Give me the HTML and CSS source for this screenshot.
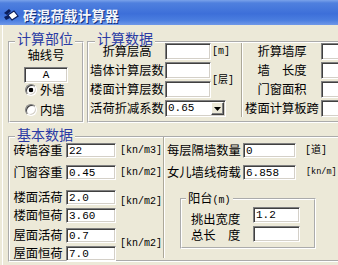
FILE: index.html
```html
<!DOCTYPE html>
<html lang="zh-CN">
<head>
    <meta charset="UTF-8">
    <meta name="viewport" content="width=device-width, initial-scale=1.0">
    <title>砖混荷载计算器</title>
    <link rel="stylesheet" href="styles.css">
</head>
<body>
    <div class="titlebar">
        <svg class="app-icon" width="16" height="14" viewBox="0 0 16 14">
            <path d="M1 5 L6 1 L8 3 L4 7 Z" fill="#0b1e5c"/>
            <path d="M5 7 L11 3 L15 8 L9 12 Z" fill="#fff" stroke="#0b1e5c" stroke-width="1.2"/>
            <path d="M1 9 L5 7 L7 10 L3 12 Z" fill="#0b1e5c"/>
        </svg>
        <span class="title">砖混荷载计算器</span>
    </div>
    <div class="client">
        <div class="top-row">
            <div class="group group-pos">
                <span class="caption">计算部位</span>
                <div class="axis-label">轴线号</div>
                <input class="field axis-input" value="A">
                <label class="radio"><input type="radio" name="wall" checked><span>外墙</span></label>
                <label class="radio"><input type="radio" name="wall"><span>内墙</span></label>
            </div>
            <div class="group group-calc">
                <span class="caption">计算数据</span>
                <div class="calc-grid">
                    <span class="sep"></span>

                    <span class="lbl">折算层高</span>
                    <input class="field" value="">
                    <span class="unit">[m]</span>
                    <span class="lbl">折算墙厚</span>
                    <input class="field" value="">

                    <span class="lbl">墙体计算层数</span>
                    <input class="field" value="">
                    <span class="unit span2">[层]</span>
                    <span class="lbl">墙　长度</span>
                    <input class="field" value="">

                    <span class="lbl">楼面计算层数</span>
                    <input class="field" value="">
                    <span class="lbl">门窗面积</span>
                    <input class="field" value="">

                    <span class="lbl">活荷折减系数</span>
                    <div class="field combo">
                        <span class="combo-val">0.65</span>
                        <span class="combo-btn">
                            <svg width="7" height="4" viewBox="0 0 7 4"><path d="M0 0 H7 L3.5 4 Z" fill="#000"/></svg>
                        </span>
                    </div>
                    <span class="lbl">楼面计算板跨</span>
                    <input class="field" value="">
                </div>
            </div>
        </div>

        <div class="group group-basic">
            <span class="caption">基本数据</span>
            <div class="basic-grid">
                <span class="sep"></span>
                <div class="group balcony">
                    <span class="caption">阳台<span class="paren">(m)</span></span>
                    <div class="balcony-grid">
                        <span class="lbl">挑出宽度</span>
                        <input class="field" value="1.2">
                        <span class="lbl">总长　度</span>
                        <input class="field" value="">
                    </div>
                </div>

                <span class="lbl">砖墙容重</span>
                <input class="field" value="22">
                <span class="unit">[kn/m3]</span>
                <span class="lbl lbl-right">每层隔墙数量</span>
                <input class="field" value="0">
                <span class="unit unit-right">[道]</span>

                <span class="lbl">门窗容重</span>
                <input class="field" value="0.45">
                <span class="unit">[kn/m2]</span>
                <span class="lbl lbl-right">女儿墙线荷载</span>
                <input class="field" value="6.858">
                <span class="unit unit-right unit-narrow">[kn/m]</span>

                <span class="lbl">楼面活荷</span>
                <input class="field" value="2.0">
                <span class="unit span2 floor-unit">[kn/m2]</span>

                <span class="lbl">楼面恒荷</span>
                <input class="field" value="3.60">

                <span class="lbl">屋面活荷</span>
                <input class="field" value="0.7">
                <span class="unit span2 roof-unit">[kn/m2]</span>

                <span class="lbl">屋面恒荷</span>
                <input class="field" value="7.0">
            </div>
        </div>
    </div>
</body>
</html>
```

FILE: styles.css
```css
html,
body {
    margin: 0;
    overflow: hidden;
}

body {
    width: 338px;
    height: 265px;
    background-color: #ece9d8;
    font-family: "Noto Sans CJK SC", sans-serif;
    font-size: 12.3px;
    color: #000;
}

/* window caption */
.titlebar {
    height: 25px;
    box-sizing: border-box;
    padding: 5px 0 0 3px;
    display: flex;
    align-items: center;
    gap: 4px;
    background: linear-gradient(to bottom, #7aa2ea 0%, #4f80de 12%, #3d6fd9 55%, #4a7ddf 80%, #6f98e8 100%);
}

.title {
    font-size: 13.5px;
    font-weight: bold;
    line-height: 20px;
    color: #f4f6fb;
    text-shadow: 1px 1px 0 #13307c;
    letter-spacing: 0.2px;
}

.client {
    margin-left: 2px;
    border-left: 1px solid #fff;
    padding: 16px 0 0 5px;
    height: 240px;
    box-sizing: border-box;
}

.top-row {
    display: flex;
    gap: 3px;
    align-items: flex-start;
}

/* etched group boxes */
.group {
    border: 2px groove #fff;
    box-sizing: border-box;
    display: flex;
    flex-direction: column;
    flex-shrink: 0;
}

.caption {
    align-self: flex-start;
    padding: 0 2px;
    margin-top: -12px;
    background-color: #ece9d8;
    font-size: 14px;
    line-height: 14px;
    color: #2b3ba4;
    white-space: nowrap;
}

.lbl {
    white-space: nowrap;
    text-align: center;
}

.field {
    box-sizing: border-box;
    width: 100%;
    height: 17px;
    margin: 0;
    padding: 0 2px;
    border: 1px solid;
    border-color: #808080 #fff #fff #808080;
    box-shadow: inset 1px 1px 0 #404040, inset -1px -1px 0 #d4d0c8;
    background-color: #fff;
    font-family: "Liberation Mono", monospace;
    font-size: 11px;
    color: #000;
    outline: none;
}

.unit {
    font-family: "Liberation Mono", "Noto Sans CJK SC", monospace;
    font-size: 10px;
    white-space: nowrap;
}

.span2 {
    grid-row: span 2;
}

.sep {
    width: 0;
    border-left: 1px solid #aca899;
    border-right: 1px solid #fff;
    align-self: stretch;
}

/* 计算部位 */
.group-pos {
    width: 76px;
    height: 82px;
    align-items: center;
}

.group-pos .caption {
    margin-left: 5px;
}

.axis-label {
    margin-top: 3px;
    line-height: 14px;
}

.axis-input {
    margin-top: 5px;
    width: 44px;
    height: 16px;
    text-align: center;
}

.radio {
    align-self: flex-start;
    margin-left: 15px;
    display: flex;
    align-items: center;
    gap: 3px;
    line-height: 14px;
}

.radio + .radio {
    margin-top: 6px;
}

.radio input {
    appearance: none;
    -webkit-appearance: none;
    box-sizing: border-box;
    width: 12px;
    height: 12px;
    margin: 0;
    border-radius: 50%;
    border: 1px solid;
    border-color: #808080 #fff #fff #808080;
    box-shadow: inset 1px 1px 0 #404040, inset -1px -1px 0 #d4d0c8;
    background-color: #fff;
}

.radio input:checked {
    background: radial-gradient(circle, #000 0, #000 2px, #fff 2.6px);
}

/* 计算数据 */
.group-calc {
    width: 280px;
    height: 82px;
}

.group-calc .caption {
    margin-left: 6px;
}

.calc-grid {
    margin-top: -2px;
    display: grid;
    grid-template-columns: 76px 46px 28px 4px 78px 40px;
    grid-template-rows: repeat(4, 17px);
    row-gap: 2px;
    align-items: center;
}

.calc-grid .lbl,
.calc-grid .unit {
    line-height: 17px;
}

.calc-grid .unit {
    padding-left: 1px;
}

.calc-grid .sep {
    grid-column: 4;
    grid-row: 1 / span 4;
    justify-self: start;
    margin-left: 2px;
}

.combo {
    grid-column: span 2;
    width: 61px;
    padding: 0;
    display: flex;
    align-items: center;
}

.combo-val {
    flex: 1;
    padding-left: 2px;
    line-height: 15px;
}

.combo-btn {
    box-sizing: border-box;
    width: 13px;
    height: 13px;
    margin-right: 1px;
    border: 1px solid;
    border-color: #fff #404040 #404040 #fff;
    box-shadow: inset -1px -1px 0 #808080;
    background-color: #ece9d8;
    display: flex;
    align-items: center;
    justify-content: center;
}

/* 基本数据 */
.group-basic {
    width: 345px;
    height: 126px;
    margin-top: 13px;
}

.group-basic > .caption {
    margin-top: -11px;
    margin-left: 5px;
}

.basic-grid {
    margin-top: 2px;
    display: grid;
    grid-template-columns: 56px 50px 47px 4px 76px 53px 40px;
    grid-template-rows: 22px 25px 18px 20px 18px 16px;
    align-items: start;
}

.basic-grid .field {
    height: 15px;
}

.basic-grid .lbl,
.basic-grid .unit {
    line-height: 15px;
}

.basic-grid .unit {
    padding-left: 4px;
}

.basic-grid .lbl-right {
    text-align: left;
}

.basic-grid .unit-right {
    padding-left: 9px;
}

.basic-grid .unit-narrow {
    padding-left: 10px;
    font-size: 8.5px;
}

.floor-unit {
    margin-top: 4px;
}

.roof-unit {
    margin-top: 8px;
}

.basic-grid .sep {
    grid-column: 4;
    grid-row: 1 / span 6;
    margin: -6px 0 4px;
}

.balcony {
    grid-column: 5 / span 3;
    grid-row: 3 / span 4;
    width: 136px;
    height: 51px;
    margin: 8px 0 0 13px;
}

.balcony .caption {
    margin: -9px 0 0 4px;
    font-size: 12.3px;
    color: #000;
}

.paren {
    font-family: "Liberation Mono", monospace;
    font-size: 10px;
}

.balcony-grid {
    margin: -1px 0 0 9px;
    display: grid;
    grid-template-columns: 62px 47px;
    grid-template-rows: 19px 16px;
}

.balcony-grid .field {
    height: 16px;
}

.balcony-grid .lbl {
    align-self: end;
    line-height: 14px;
    text-align: left;
}
```
